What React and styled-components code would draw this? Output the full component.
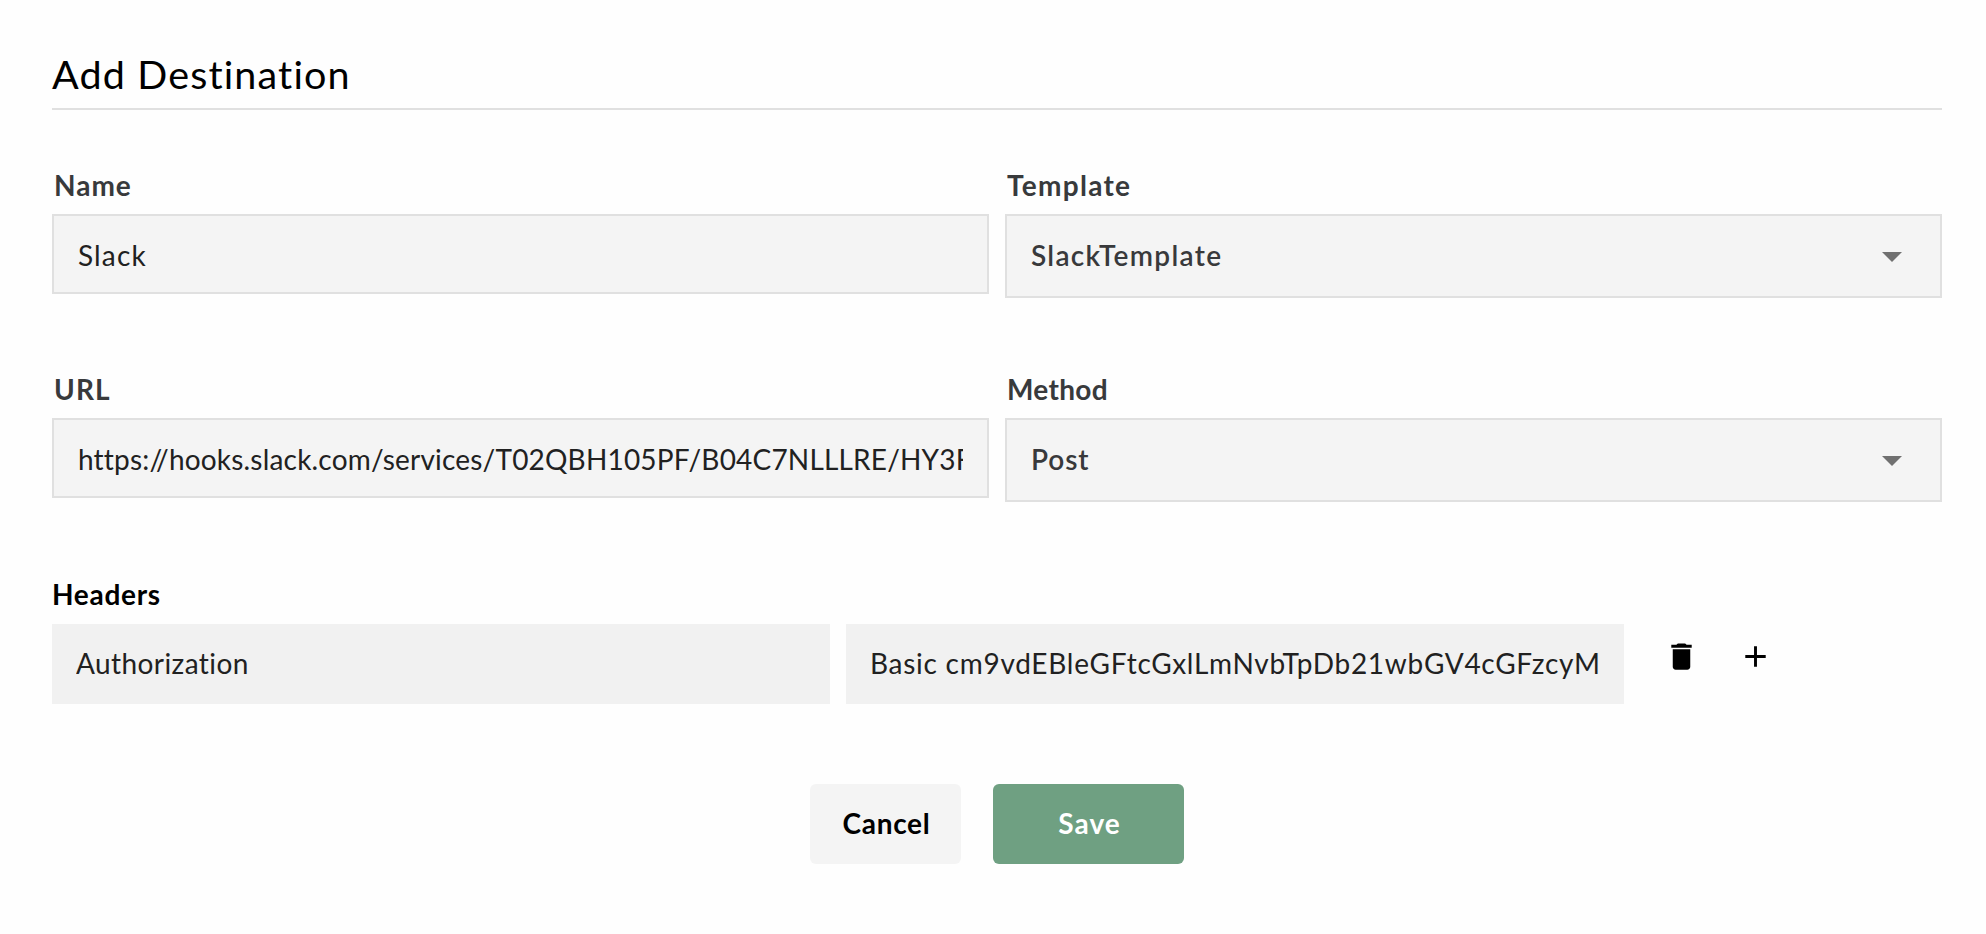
import React, { useState } from "react";
import styled, { createGlobalStyle } from "styled-components";

const GlobalStyle = createGlobalStyle`
  *, *::before, *::after { box-sizing: border-box; }
  body {
    margin: 0;
    background: #fefefe;
    color: #000;
    font-family: Lato, "Open Sans", sans-serif;
    font-size: 28px;
  }
`;

const Page = styled.main`
  min-height: 934px;
  padding: 50px 44px 0 52px;
`;

const Title = styled.h1`
  margin: 0;
  padding-bottom: 10px;
  border-bottom: 2px solid #e0e0e0;
  font-size: 39.5px;
  font-weight: 400;
  line-height: 48px;
  letter-spacing: 1.15px;
`;

const FieldGrid = styled.div`
  display: grid;
  grid-template-columns: 1fr 1fr;
  gap: 74px 16px;
  margin-top: 58px;
`;

const Field = styled.div`
  display: flex;
  flex-direction: column;
  gap: 12px;
  min-width: 0;
`;

const Label = styled.label`
  padding-left: 2px;
  color: #383a3c;
  font-weight: 700;
  line-height: 34px;
  letter-spacing: ${(p) => p.$tracking}px;
`;

const TextInput = styled.input`
  display: block;
  width: 100%;
  height: 80px;
  margin: 0;
  padding: 2px 24px 0;
  border: 2px solid #e0e0e0;
  border-radius: 0;
  outline: none;
  background: #f4f4f4;
  color: #212121;
  font: inherit;
  letter-spacing: ${(p) => p.$tracking}px;
`;

const HeaderInput = styled(TextInput)`
  width: 778px;
  padding: 0 24px 2px;
  border: 0;
  background: #f1f1f1;
`;

const SelectBox = styled.button`
  display: flex;
  align-items: center;
  justify-content: space-between;
  width: 100%;
  height: 84px;
  margin: 0;
  padding: 0 24px;
  border: 2px solid #e0e0e0;
  background: #f4f4f4;
  color: #38393b;
  font: inherit;
  font-weight: 600;
  letter-spacing: ${(p) => p.$tracking}px;
`;

const SelectValue = styled.span`
  padding-bottom: 3px;
`;

const Arrow = styled.svg`
  width: 48px;
  height: 48px;
  fill: #707070;
`;

const SectionTitle = styled.h2`
  margin: 75px 0 13px;
  font-size: inherit;
  font-weight: 700;
  line-height: 34px;
  letter-spacing: 0.7px;
`;

const HeaderRow = styled.div`
  display: flex;
  gap: 16px;
`;

const RowActions = styled.div`
  display: flex;
  align-items: flex-start;
  gap: 39px;
  padding: 15px 0 0 24px;
`;

const IconButton = styled.button`
  width: 35px;
  height: 35px;
  padding: 0;
  border: 0;
  background: none;

  svg {
    display: block;
    width: 35px;
    height: 35px;
    fill: #000;
  }
`;

const Footer = styled.div`
  display: flex;
  justify-content: center;
  gap: 32px;
  margin-top: 80px;
`;

const Button = styled.button`
  width: ${(p) => (p.$primary ? 191 : 151)}px;
  height: 80px;
  padding: 0 0 2px 2px;
  border: 0;
  border-radius: 6px;
  background: ${(p) => (p.$primary ? "#6fa082" : "#f4f4f4")};
  color: ${(p) => (p.$primary ? "#fff" : "#000")};
  font: inherit;
  font-weight: 700;
  letter-spacing: ${(p) => (p.$primary ? 1 : 0.7)}px;
`;

function TextField({ id, label, value, onChange, labelTracking, tracking }) {
  return (
    <Field>
      <Label htmlFor={id} $tracking={labelTracking}>{label}</Label>
      <TextInput
        id={id}
        value={value}
        onChange={(e) => onChange(e.target.value)}
        spellCheck={false}
        $tracking={tracking}
      />
    </Field>
  );
}

function SelectField({ id, label, value, labelTracking, tracking }) {
  return (
    <Field>
      <Label htmlFor={id} $tracking={labelTracking}>{label}</Label>
      <SelectBox id={id} type="button" aria-haspopup="listbox" $tracking={tracking}>
        <SelectValue>{value}</SelectValue>
        <Arrow viewBox="0 0 24 24" aria-hidden="true">
          <path d="M7 10l5 5 5-5z" />
        </Arrow>
      </SelectBox>
    </Field>
  );
}

export default function App() {
  const [name, setName] = useState("Slack");
  const [url, setUrl] = useState(
    "https://hooks.slack.com/services/T02QBH105PF/B04C7NLLLRE/HY3F"
  );
  const [headerKey, setHeaderKey] = useState("Authorization");
  const [headerValue, setHeaderValue] = useState(
    "Basic cm9vdEBleGFtcGxlLmNvbTpDb21wbGV4cGFzcyM"
  );

  return (
    <Page>
      <GlobalStyle />
      <Title>Add Destination</Title>

      <FieldGrid>
        <TextField id="name" label="Name" value={name} onChange={setName} labelTracking={1} tracking={1.15} />
        <SelectField id="template" label="Template" value="SlackTemplate" labelTracking={1.3} tracking={1.3} />
        <TextField id="url" label="URL" value={url} onChange={setUrl} labelTracking={1.1} tracking={0.19} />
        <SelectField id="method" label="Method" value="Post" labelTracking={0.3} tracking={0.9} />
      </FieldGrid>

      <SectionTitle>Headers</SectionTitle>
      <HeaderRow>
        <HeaderInput
          aria-label="Header name"
          value={headerKey}
          onChange={(e) => setHeaderKey(e.target.value)}
          spellCheck={false}
          $tracking={0.42}
        />
        <HeaderInput
          aria-label="Header value"
          value={headerValue}
          onChange={(e) => setHeaderValue(e.target.value)}
          spellCheck={false}
          $tracking={0.73}
        />
        <RowActions>
          <IconButton type="button" aria-label="Delete header">
            <svg viewBox="0 0 24 24">
              <path d="M6 19c0 1.1.9 2 2 2h8c1.1 0 2-.9 2-2V7H6v12zM19 4h-3.5l-1-1h-5l-1 1H5v2h14V4z" />
            </svg>
          </IconButton>
          <IconButton type="button" aria-label="Add header">
            <svg viewBox="0 0 24 24">
              <path d="M19 13h-6v6h-2v-6H5v-2h6V5h2v6h6v2z" />
            </svg>
          </IconButton>
        </RowActions>
      </HeaderRow>

      <Footer>
        <Button type="button">Cancel</Button>
        <Button type="button" $primary>Save</Button>
      </Footer>
    </Page>
  );
}
